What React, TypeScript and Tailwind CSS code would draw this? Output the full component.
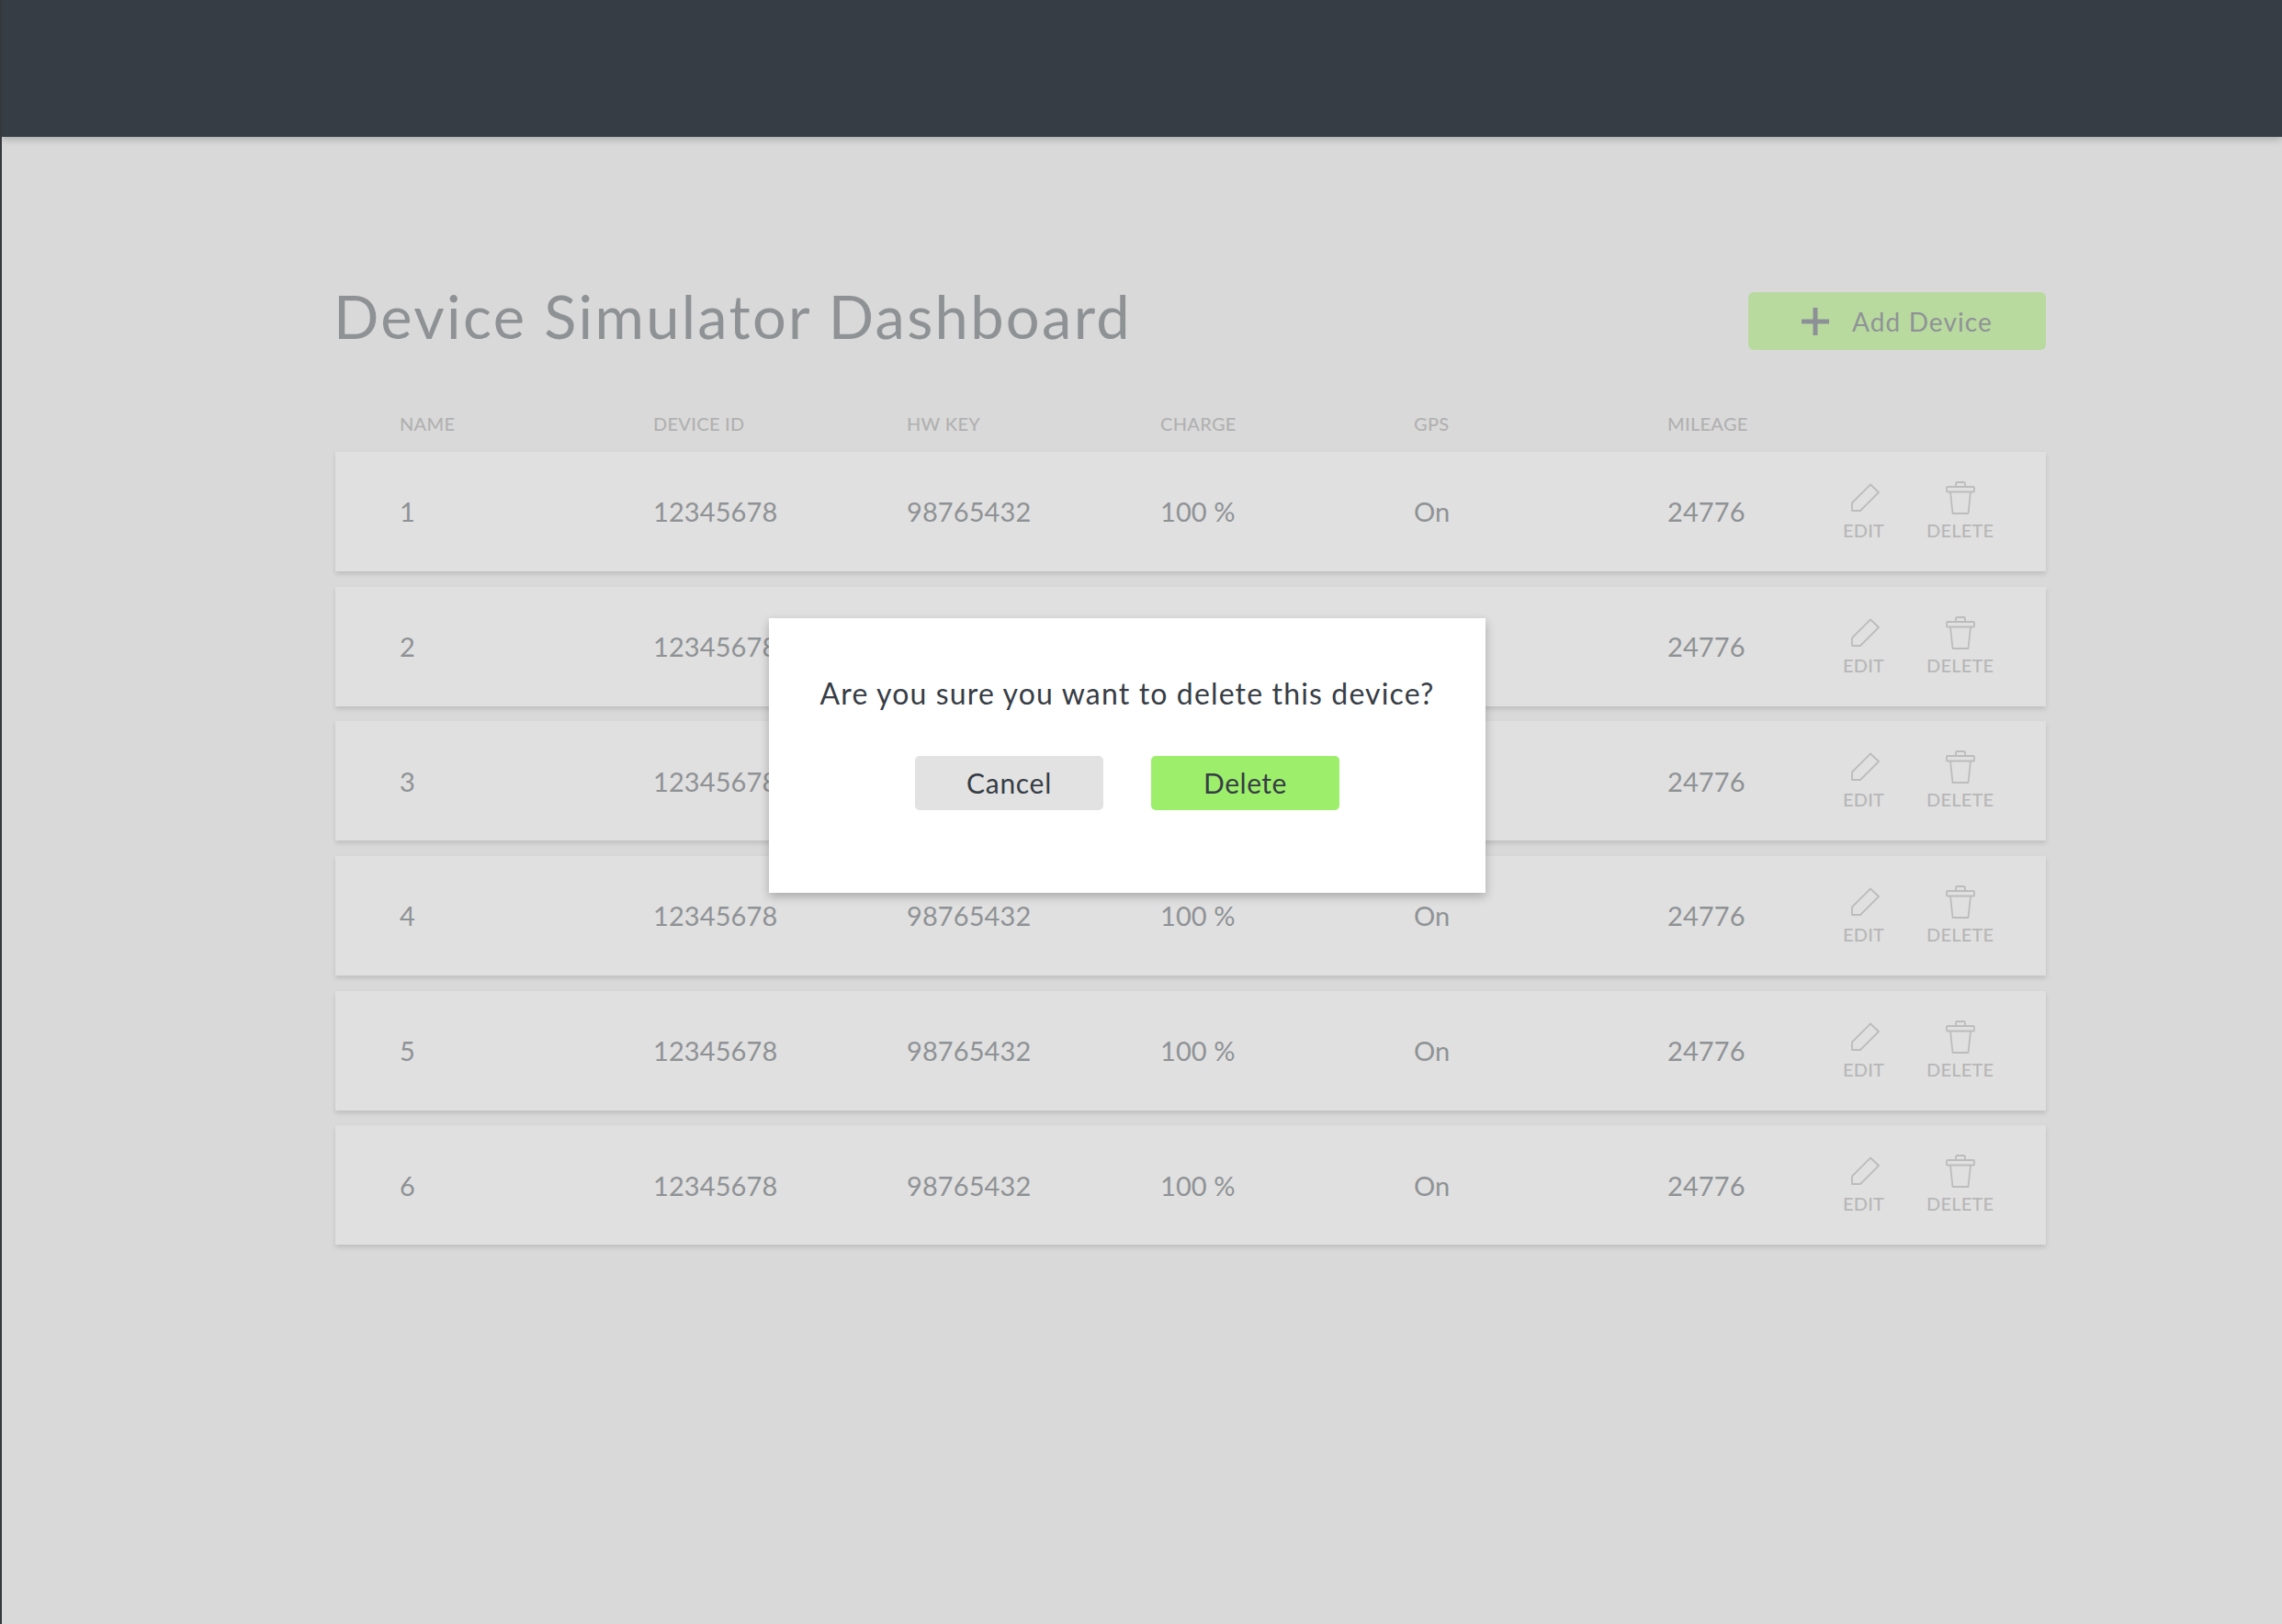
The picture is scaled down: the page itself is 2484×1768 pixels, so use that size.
import React from "react";

const font = { fontFamily: '"Lato", "Noto Sans", sans-serif' };
const columns = ["NAME", "DEVICE ID", "HW KEY", "CHARGE", "GPS", "MILEAGE"];
const rows = ["1", "2", "3", "4", "5", "6"];

function PencilIcon() {
  return (
    <svg width="32" height="32" viewBox="0 0 32 32" fill="none" stroke="#bcbcbc" strokeWidth="1.8" strokeLinejoin="round" className="ml-[3px]">
      <path d="M2 30V21.5L22 1.5L31 10L11 30Z" />
    </svg>
  );
}

function TrashIcon() {
  return (
    <svg width="32" height="36" viewBox="0 0 32 36" fill="none" stroke="#bcbcbc" strokeWidth="1.8" strokeLinejoin="round">
      <path d="M11 6V2.5Q11 1 12.5 1H19.5Q21 1 21 2.5V6" />
      <rect x="1" y="6" width="30" height="5.5" rx="1" />
      <path d="M5 11.5L7.5 35H24.5L27 11.5" />
    </svg>
  );
}

function Action({ label, icon }: { label: string; icon: React.ReactNode }) {
  return (
    <div className="flex flex-col items-center">
      <div className="flex h-[36px] items-center justify-center">{icon}</div>
      <span className="mt-[5px] text-[20px] leading-[24px] font-medium tracking-[0.2px] text-[#b7b7b7]">{label}</span>
    </div>
  );
}

function Row({ name }: { name: string }) {
  const cells = [name, "12345678", "98765432", "100 %", "On", "24776"];
  return (
    <div className="flex h-[130px] items-center bg-[#e0e0e0] pl-[70px] shadow-[0_3px_5px_rgba(0,0,0,0.12)]">
      {cells.map((c, i) => (
        <div key={i} className="w-[276px] shrink-0 text-[29px] tracking-[0.1px] text-[#8f9295]">{c}</div>
      ))}
      <div className="ml-[-85px] flex items-center gap-[46px] pb-[1px]">
        <Action label="EDIT" icon={<PencilIcon />} />
        <Action label="DELETE" icon={<TrashIcon />} />
      </div>
    </div>
  );
}

export default function App() {
  return (
    <div className="relative min-h-[1768px] overflow-hidden border-l-2 border-[#35383d] bg-[#d9d9d9]" style={font}>
      <header className="h-[149px] bg-[#373d45] shadow-[0_2px_8px_rgba(0,0,0,0.25)]" />
      <main className="pl-[363px] pr-[257px] pt-[169px]">
        <div className="flex h-[63px] items-center justify-between">
          <h1 className="ml-[-2px] mt-[-10px] text-[65px] leading-none font-normal tracking-[2.3px] text-[#8f9295]">Device Simulator Dashboard</h1>
          <button className="flex h-[63px] w-[324px] items-center justify-center gap-[25px] rounded-[6px] bg-[#b9da9f] text-[28px] tracking-[1.1px] text-[#8f9397]">
            <svg width="30" height="30" viewBox="0 0 30 30" fill="#8d9197">
              <path d="M12.5 0H17.5V12.5H30V17.5H17.5V30H12.5V17.5H0V12.5H12.5Z" />
            </svg>
            Add Device
          </button>
        </div>
        <div className="flex h-[111px] items-center pl-[70px] pt-[49px]">
          {columns.map((c) => (
            <div key={c} className="w-[276px] text-[20px] font-medium tracking-[0.3px] text-[#b1b1b1]">{c}</div>
          ))}
        </div>
        <div className="flex flex-col gap-[16.7px]">
          {rows.map((r) => (
            <Row key={r} name={r} />
          ))}
        </div>
      </main>
      <div className="absolute left-[835px] top-[673px] flex h-[299px] w-[780px] flex-col items-center bg-white pt-[58px] shadow-[0_4px_10px_rgba(0,0,0,0.25)]">
        <p className="text-[32px] leading-[48px] tracking-[1.15px] text-[#373d45]">Are you sure you want to delete this device?</p>
        <div className="mt-[44px] flex gap-[52px]">
          <button className="h-[59px] w-[205px] rounded-[5px] bg-[#e2e2e2] text-[30px] tracking-[0.7px] text-[#373d45]">Cancel</button>
          <button className="h-[59px] w-[205px] rounded-[5px] bg-[#9def6b] text-[30px] tracking-[0.5px] text-[#373d45]">Delete</button>
        </div>
      </div>
    </div>
  );
}
